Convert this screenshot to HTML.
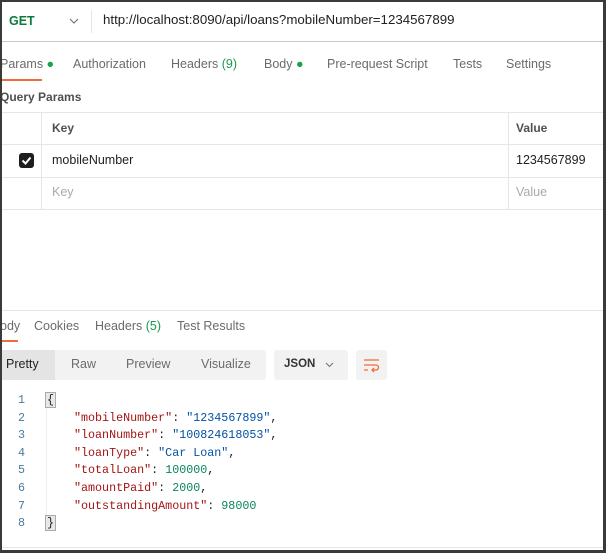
<!DOCTYPE html>
<html><head><style>
*{margin:0;padding:0;box-sizing:border-box}
body{width:606px;height:553px;background:#fff;font-family:"Liberation Sans",sans-serif;font-size:12.5px;color:#212121;position:relative;overflow:hidden}
.a{position:absolute;white-space:nowrap}
.frame{position:absolute;left:0;top:0;width:606px;height:553px;border:2px solid #3a3a3a;border-right-width:3px;border-bottom-width:3px;pointer-events:none}
.hl{position:absolute;height:1px;background:#e6e6e6}
.vl{position:absolute;width:1px;background:#e6e6e6}
.g{color:#6b6b6b}
.mono{font-family:"Liberation Mono",monospace;font-size:11.7px}
.k{color:#a31515}.s{color:#0451a5}.n{color:#098658}
.ln{color:#4a7a9b}
</style></head><body>
<div class="a" style="left:9px;top:14px;color:#0b7a3b;font-weight:bold;font-size:12.5px">GET</div>
<svg class="a" style="left:69px;top:18px" width="10" height="7"><path d="M1 1 L5 5 L9 1" fill="none" stroke="#777" stroke-width="1.2"/></svg>
<div class="vl" style="left:91px;top:10px;height:23px"></div>
<div class="a" style="left:103px;top:12px;font-size:13.3px">http://localhost:8090/api/loans?mobileNumber=1234567899</div>
<div class="hl" style="left:0;top:41px;width:606px;background:#c8c8c8"></div>

<div class="a g" style="left:0;top:57px">Params <span style="color:#1aa34a">●</span></div>
<div class="hl" style="left:0;top:79px;width:42px;height:2px;background:#f26b3a"></div>
<div class="a g" style="left:73px;top:57px">Authorization</div>
<div class="a g" style="left:171px;top:57px">Headers <span style="color:#1a9a4a">(9)</span></div>
<div class="a g" style="left:264px;top:57px">Body <span style="color:#1aa34a">●</span></div>
<div class="a g" style="left:327px;top:57px">Pre-request Script</div>
<div class="a g" style="left:453px;top:57px">Tests</div>
<div class="a g" style="left:506px;top:57px">Settings</div>
<div class="a" style="left:0;top:90px;color:#505050;font-weight:bold;font-size:12px">Query Params</div>

<div class="hl" style="left:0;top:112px;width:606px"></div>
<div class="hl" style="left:0;top:144px;width:606px"></div>
<div class="hl" style="left:0;top:177px;width:606px"></div>
<div class="hl" style="left:0;top:209px;width:606px"></div>
<div class="vl" style="left:41px;top:112px;height:97px"></div>
<div class="vl" style="left:508px;top:112px;height:97px"></div>
<div class="a" style="left:52px;top:121px;color:#505050;font-weight:bold;font-size:12px">Key</div>
<div class="a" style="left:516px;top:121px;color:#505050;font-weight:bold;font-size:12px">Value</div>
<div class="a" style="left:19px;top:153px;width:15px;height:15px;background:#1e1e1e;border-radius:3px"></div>
<svg class="a" style="left:19px;top:153px" width="15" height="15"><path d="M3.5 7.5 L6.5 10.5 L11.5 4.5" fill="none" stroke="#fff" stroke-width="2"/></svg>
<div class="a" style="left:52px;top:153px">mobileNumber</div>
<div class="a" style="left:516px;top:153px">1234567899</div>
<div class="a" style="left:52px;top:185px;color:#aaa">Key</div>
<div class="a" style="left:516px;top:185px;color:#aaa">Value</div>

<div class="hl" style="left:0;top:310px;width:606px"></div>
<div class="a g" style="left:0;top:319px">ody</div>
<div class="hl" style="left:0;top:340px;width:18px;height:2px;background:#f26b3a"></div>
<div class="a g" style="left:34px;top:319px">Cookies</div>
<div class="a g" style="left:95px;top:319px">Headers <span style="color:#1a9a4a">(5)</span></div>
<div class="a g" style="left:177px;top:319px">Test Results</div>

<div class="a" style="left:0;top:350px;width:266px;height:30px;background:#f2f2f2;border-radius:3px"></div>
<div class="a" style="left:0;top:350px;width:55px;height:30px;background:#e4e4e4"></div>
<div class="a" style="left:6px;top:357px">Pretty</div>
<div class="a g" style="left:71px;top:357px">Raw</div>
<div class="a g" style="left:126px;top:357px">Preview</div>
<div class="a g" style="left:201px;top:357px">Visualize</div>
<div class="a" style="left:274px;top:350px;width:74px;height:30px;background:#f2f2f2;border-radius:3px"></div>
<div class="a" style="left:284px;top:358px;font-weight:bold;font-size:11.5px;color:#333">JSON</div>
<svg class="a" style="left:325px;top:362px" width="9" height="6"><path d="M1 1 L4.5 4.5 L8 1" fill="none" stroke="#777" stroke-width="1.1"/></svg>
<div class="a" style="left:356px;top:350px;width:31px;height:30px;background:#f2f2f2;border-radius:3px"></div>
<svg class="a" style="left:363px;top:357px" width="18" height="16"><path d="M1 3 H16 M1 8 H13 a2.5 2.5 0 0 1 0 5 H9 M11 11 L9 13 L11 15 M1 13 H5" fill="none" stroke="#f26b3a" stroke-width="1.3"/></svg>

<div class="vl" style="left:46px;top:392px;height:140px;background:#eee"></div>
<div class="mono">
<div class="a ln" style="left:18px;top:393px">1</div>
<div class="a ln" style="left:18px;top:411px">2</div>
<div class="a ln" style="left:18px;top:428px">3</div>
<div class="a ln" style="left:18px;top:446px">4</div>
<div class="a ln" style="left:18px;top:463px">5</div>
<div class="a ln" style="left:18px;top:481px">6</div>
<div class="a ln" style="left:18px;top:499px">7</div>
<div class="a ln" style="left:18px;top:516px">8</div>
<div class="a" style="left:45px;top:392px;background:#e8e8e8;border:1px solid #aaa;padding:0 1px">{</div>
<div class="a" style="left:74px;top:411px"><span class="k">"mobileNumber"</span>: <span class="s">"1234567899"</span>,</div>
<div class="a" style="left:74px;top:428px"><span class="k">"loanNumber"</span>: <span class="s">"100824618053"</span>,</div>
<div class="a" style="left:74px;top:446px"><span class="k">"loanType"</span>: <span class="s">"Car Loan"</span>,</div>
<div class="a" style="left:74px;top:463px"><span class="k">"totalLoan"</span>: <span class="n">100000</span>,</div>
<div class="a" style="left:74px;top:481px"><span class="k">"amountPaid"</span>: <span class="n">2000</span>,</div>
<div class="a" style="left:74px;top:499px"><span class="k">"outstandingAmount"</span>: <span class="n">98000</span></div>
<div class="a" style="left:45px;top:515px;background:#e8e8e8;border:1px solid #aaa;padding:0 1px">}</div>
</div>
<div class="hl" style="left:0;top:547px;width:606px"></div>
<div class="frame"></div>
</body></html>
